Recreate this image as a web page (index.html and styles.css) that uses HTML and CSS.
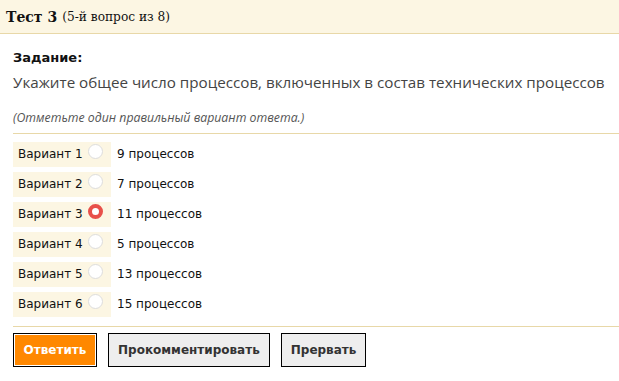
FILE: index.html
```html
<!DOCTYPE html>
<html lang="ru">
<head>
    <meta charset="UTF-8">
    <title>Тест 3</title>
    <link rel="stylesheet" href="styles.css">
</head>
<body>
    <header class="test-header">
        <span class="test-title">Тест 3</span>
        <span class="test-progress">(5-й вопрос из 8)</span>
    </header>

    <main class="question">
        <h3 class="task-label">Задание:</h3>
        <p class="task-text">Укажите общее число процессов, включенных в состав технических процессов</p>
        <p class="task-hint">(Отметьте один правильный вариант ответа.)</p>

        <ul class="answers">
            <li class="answer">
                <label class="answer-label">Вариант 1 <span class="radio"></span></label>
                <span class="answer-text">9 процессов</span>
            </li>
            <li class="answer">
                <label class="answer-label">Вариант 2 <span class="radio"></span></label>
                <span class="answer-text">7 процессов</span>
            </li>
            <li class="answer">
                <label class="answer-label">Вариант 3 <span class="radio checked"></span></label>
                <span class="answer-text">11 процессов</span>
            </li>
            <li class="answer">
                <label class="answer-label">Вариант 4 <span class="radio"></span></label>
                <span class="answer-text">5 процессов</span>
            </li>
            <li class="answer">
                <label class="answer-label">Вариант 5 <span class="radio"></span></label>
                <span class="answer-text">13 процессов</span>
            </li>
            <li class="answer">
                <label class="answer-label">Вариант 6 <span class="radio"></span></label>
                <span class="answer-text">15 процессов</span>
            </li>
        </ul>

        <div class="actions">
            <button class="btn btn-primary">Ответить</button>
            <button class="btn">Прокомментировать</button>
            <button class="btn">Прервать</button>
        </div>
    </main>
</body>
</html>
```

FILE: styles.css
```css
body {
    margin: 0;
    font-family: "DejaVu Sans", sans-serif;
    color: #111;
    background: #fff;
}
.test-header {
    background: #fcf6e3;
    border-bottom: 1px solid #e8d8a8;
    height: 33px;
    padding: 0 6px;
    display: flex;
    align-items: center;
    gap: 5px;
    font-family: "DejaVu Serif", serif;
}
.test-title {
    font-weight: bold;
    font-size: 14px;
}
.test-progress {
    font-size: 12.2px;
}
.question {
    padding: 0 0 0 13px;
}
.task-label {
    margin: 15px 0 0;
    font-size: 13px;
    font-weight: bold;
    line-height: 18px;
}
.task-text {
    margin: 5px 0 0;
    font-family: "Open Sans", sans-serif;
    font-size: 15.2px;
    line-height: 20px;
    color: #444;
}
.task-hint {
    margin: 18px 0 0;
    font-family: "Open Sans", sans-serif;
    font-style: italic;
    font-size: 12.3px;
    line-height: 16px;
    color: #555;
    padding-bottom: 7px;
    border-bottom: 1px solid #e8d8a8;
}
.answers {
    list-style: none;
    margin: 0;
    padding: 5px 0 7px;
    border-bottom: 1px solid #e8d8a8;
}
.answer {
    display: flex;
    align-items: center;
    height: 30px;
}
.answer-label {
    display: flex;
    align-items: center;
    gap: 5px;
    width: 93px;
    height: 25px;
    padding-left: 5px;
    background: #fcf6e3;
    font-size: 12px;
}
.radio {
    width: 15px;
    height: 15px;
    border: 1px solid #ddd;
    border-radius: 50%;
    background: #fff;
    margin-top: -6px;
    box-sizing: border-box;
}
.radio.checked {
    border: 4px solid #e8504a;
}
.answer-text {
    margin-left: 6px;
    font-size: 12px;
}
.actions {
    display: flex;
    gap: 11px;
    padding: 6px 0 10px;
}
.btn {
    font-family: "DejaVu Sans", sans-serif;
    font-weight: bold;
    font-size: 12px;
    color: #333;
    background: #eee;
    border: 1px solid #000;
    height: 34px;
    padding: 0 9px;
}
.btn-primary {
    background: #ff8800;
    color: #fff;
    box-shadow: inset 0 0 0 1px #fff;
    width: 84px;
}
```
